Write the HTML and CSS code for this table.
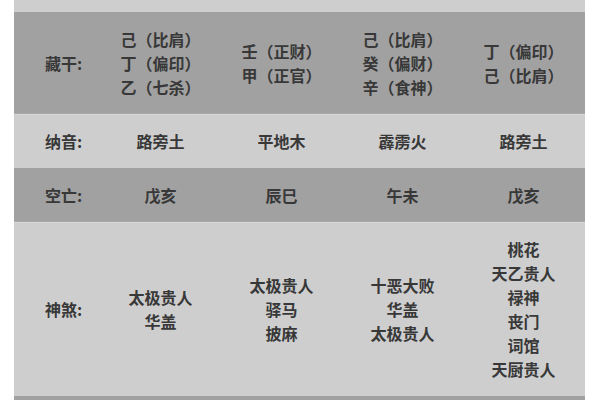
FILE: index.html
```html
<!DOCTYPE html>
<html lang="zh">
<head>
<meta charset="utf-8">
<link rel="stylesheet" href="styles.css">
</head>
<body>
<div class="table">
  <div class="row light stub"></div>
  <div class="row dark">
    <div class="label">藏干:</div>
    <div class="cell">己（比肩）<br>丁（偏印）<br>乙（七杀）</div>
    <div class="cell">壬（正财）<br>甲（正官）</div>
    <div class="cell">己（比肩）<br>癸（偏财）<br>辛（食神）</div>
    <div class="cell">丁（偏印）<br>己（比肩）</div>
  </div>
  <div class="row light">
    <div class="label">纳音:</div>
    <div class="cell">路旁土</div>
    <div class="cell">平地木</div>
    <div class="cell">霹雳火</div>
    <div class="cell">路旁土</div>
  </div>
  <div class="row dark">
    <div class="label">空亡:</div>
    <div class="cell">戊亥</div>
    <div class="cell">辰巳</div>
    <div class="cell">午未</div>
    <div class="cell">戊亥</div>
  </div>
  <div class="row light">
    <div class="label">神煞:</div>
    <div class="cell">太极贵人<br>华盖</div>
    <div class="cell">太极贵人<br>驿马<br>披麻</div>
    <div class="cell">十恶大败<br>华盖<br>太极贵人</div>
    <div class="cell">桃花<br>天乙贵人<br>禄神<br>丧门<br>词馆<br>天厨贵人</div>
  </div>
  <div class="row dark stub2"></div>
</div>
</body>
</html>
```
FILE: styles.css
```css
html, body {
  margin: 0;
  padding: 0;
  background: #ffffff;
}
body {
  font-family: "Noto Sans CJK SC", "Noto Sans", sans-serif;
  color: #383838;
  font-size: 16px;
  line-height: 24px;
  font-weight: 700;
  text-spacing-trim: space-all;
}
.table {
  margin-left: 14px;
  width: 571px;
  overflow: hidden;
  height: 400px;
}
.row {
  display: grid;
  grid-template-columns: 86px repeat(4, 121px);
  align-items: center;
  padding: 15px 0;
}
.light {
  background: #cecece;
  box-shadow: inset 0 1px 0 #d6d6d6;
}
.dark {
  background: #a1a1a1;
  box-shadow: inset 0 -1px 0 #a9a9a9;
}
.stub {
  height: 12px;
  padding: 0;
  box-shadow: none;
}
.stub2 {
  height: 40px;
}
.label {
  padding-left: 31px;
  text-align: left;
}
.cell {
  text-align: center;
  white-space: nowrap;
}
```
